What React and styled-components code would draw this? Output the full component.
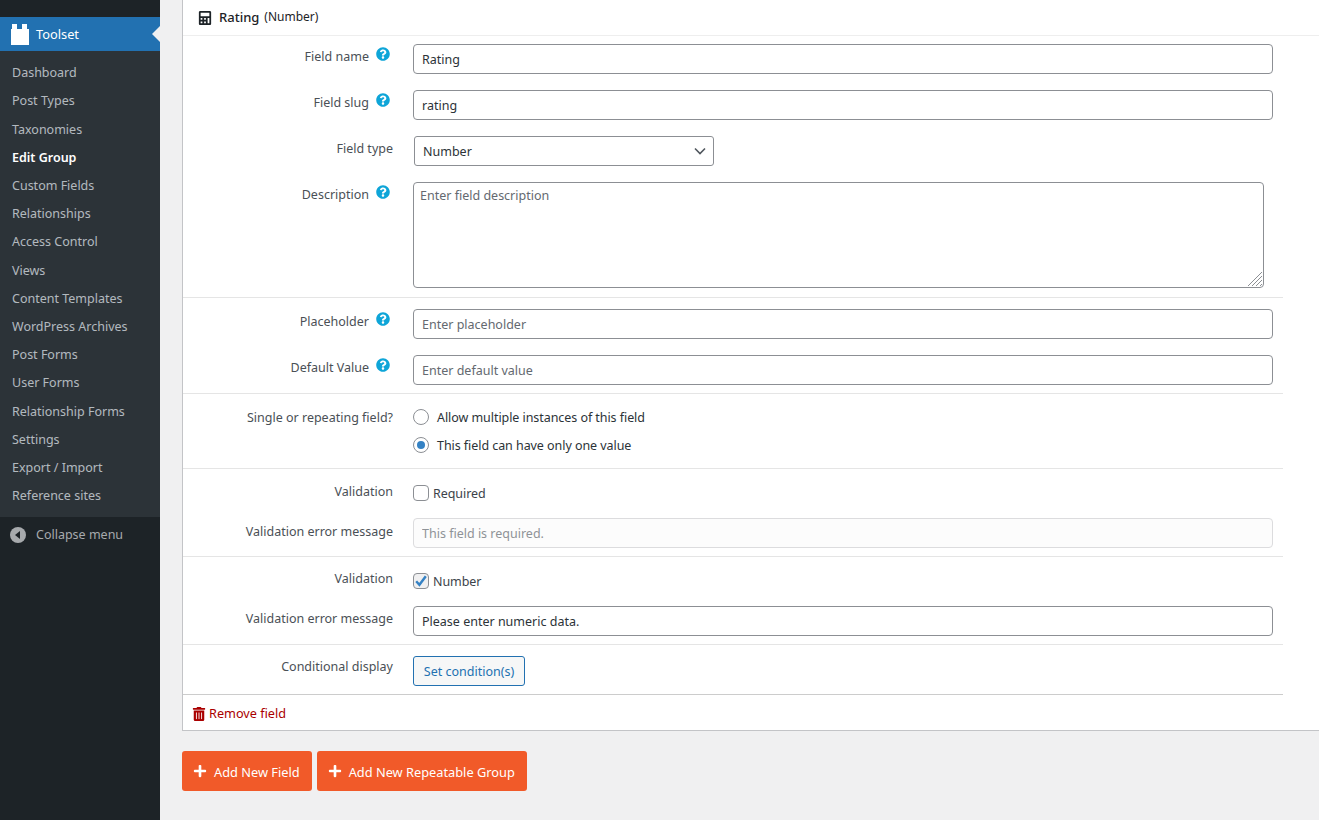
import styled, { createGlobalStyle } from "styled-components";
import { FaCalculator, FaQuestionCircle, FaTrashAlt, FaPlus } from "react-icons/fa";

const menuItems = [
  "Dashboard",
  "Post Types",
  "Taxonomies",
  "Edit Group",
  "Custom Fields",
  "Relationships",
  "Access Control",
  "Views",
  "Content Templates",
  "WordPress Archives",
  "Post Forms",
  "User Forms",
  "Relationship Forms",
  "Settings",
  "Export / Import",
  "Reference sites",
];

const chevron =
  "data:image/svg+xml,%3Csvg xmlns='http://www.w3.org/2000/svg' width='12' height='8' viewBox='0 0 12 8'%3E%3Cpath d='M1 1.5l5 5 5-5' fill='none' stroke='%2350575e' stroke-width='1.6'/%3E%3C/svg%3E";
const tick =
  "data:image/svg+xml,%3Csvg xmlns='http://www.w3.org/2000/svg' width='16' height='16' viewBox='0 0 16 16'%3E%3Cpath d='M3.2 8.2l3.2 3.6 6.4-8.6' fill='none' stroke='%233582c4' stroke-width='2.4'/%3E%3C/svg%3E";

const GlobalStyle = createGlobalStyle`
  html, body {
    margin: 0;
    padding: 0;
    height: 100%;
    overflow: hidden;
    background: #f0f0f1;
    font-family: "Noto Sans", "Open Sans", sans-serif;
    font-size: 12.5px;
    line-height: 18.2px;
    color: #4a5056;
  }
`;

const Page = styled.div`
  display: flex;
  height: 820px;
  overflow: hidden;
`;

const Sidebar = styled.nav`
  width: 160px;
  flex: none;
  background: #1d2327;
  padding-top: 17px;
`;

const CurrentMenu = styled.div`
  position: relative;
  display: flex;
  align-items: center;
  gap: 7px;
  height: 34px;
  padding-left: 11px;
  background: #2271b1;
  color: #fff;
  font-size: 12.8px;
  &::after {
    content: "";
    position: absolute;
    right: 0;
    top: 9px;
    border: 8px solid transparent;
    border-right-color: #f0f0f1;
  }
`;

const SubMenu = styled.ul`
  list-style: none;
  margin: 0;
  padding: 8.2px 0 6.6px;
  background: #2c3338;
`;

const SubItem = styled.li`
  padding: 5px 12px;
  color: ${(p) => (p.$active ? "#fff" : "rgba(240, 246, 252, 0.7)")};
  font-weight: ${(p) => (p.$active ? 600 : 400)};
`;

const Collapse = styled.div`
  display: flex;
  align-items: center;
  gap: 10px;
  padding: 9px 10px 7px;
  color: #a7aaad;
`;

const Main = styled.main`
  flex: 1;
  min-width: 0;
  padding-left: 22px;
`;

const Card = styled.section`
  background: #fff;
  border-left: 1px solid #c3c4c7;
  border-bottom: 1px solid #c3c4c7;
`;

const CardHeader = styled.header`
  display: flex;
  align-items: center;
  gap: 7px;
  height: 35px;
  padding-left: 15px;
  border-bottom: 1px solid #eee;
  color: #1d2327;
  svg {
    font-size: 14px;
  }
`;

const Title = styled.span`
  font-weight: 500;
  font-size: 13px;
`;

const TitleType = styled.span`
  margin-left: -2px;
  font-size: 12px;
`;

const Body = styled.div`
  width: 1100px;
`;

const Group = styled.div`
  display: flex;
  flex-direction: column;
  gap: ${(p) => p.$gap ?? 16}px;
  padding: ${(p) => p.$top}px 0 ${(p) => p.$bottom}px;
  border-bottom: 1px solid ${(p) => (p.$strong ? "#ccc" : "#e5e5e5")};
`;

const Row = styled.div`
  display: grid;
  grid-template-columns: 230px 1fr;
`;

const Label = styled.div`
  display: flex;
  justify-content: flex-end;
  align-items: flex-start;
  gap: 7px;
  padding-right: 20px;
  margin-top: ${(p) => p.$top ?? 4}px;
  svg {
    color: #0ea5d8;
    font-size: 14px;
    margin: 0 3px 0 0;
    position: relative;
    top: -1px;
  }
`;

const TextInput = styled.input`
  box-sizing: border-box;
  display: block;
  width: 860px;
  height: 30px;
  padding: 0 8px;
  border: 1px solid #8c8f94;
  border-radius: 4px;
  font: inherit;
  color: #2c3338;
  background: #fff;
  outline: none;
  &::placeholder {
    color: #646970;
    opacity: 1;
  }
  &:disabled {
    padding-top: 1px;
    background: #fcfcfc;
    border-color: #dcdcde;
    &::placeholder {
      color: #8f9397;
    }
  }
`;

const Select = styled.select`
  appearance: none;
  box-sizing: border-box;
  display: block;
  width: 300px;
  height: 30px;
  margin-left: 1px;
  padding: 2px 24px 0 8px;
  border: 1px solid #8c8f94;
  border-radius: 3px;
  font: inherit;
  color: #2c3338;
  background: #fff url("${chevron}") no-repeat right 7px center;
`;

const AreaWrap = styled.div`
  position: relative;
  width: 851px;
  svg {
    position: absolute;
    right: 1px;
    bottom: 1px;
  }
`;

const TextArea = styled.textarea`
  box-sizing: border-box;
  display: block;
  width: 851px;
  height: 106px;
  padding: 4px 6px;
  border: 1px solid #8c8f94;
  border-radius: 4px;
  font: inherit;
  color: #2c3338;
  outline: none;
  resize: none;
  &::placeholder {
    color: #646970;
    opacity: 1;
  }
`;

const Options = styled.div`
  display: flex;
  flex-direction: column;
  gap: 8px;
`;

const Option = styled.label`
  display: flex;
  align-items: flex-start;
  height: 20px;
  line-height: 22px;
  letter-spacing: -0.06px;
  gap: ${(p) => p.$gap ?? 8}px;
  color: ${(p) => p.$color ?? "#2c3338"};
`;

const Radio = styled.input.attrs({ type: "radio" })`
  appearance: none;
  box-sizing: border-box;
  position: relative;
  width: 16px;
  height: 16px;
  margin: 2px 0 0;
  border: 1px solid #8c8f94;
  border-radius: 50%;
  background: #fff;
  &:checked::before {
    content: "";
    position: absolute;
    inset: 3px;
    border-radius: 50%;
    background: #3582c4;
  }
`;

const Check = styled.input.attrs({ type: "checkbox" })`
  appearance: none;
  box-sizing: border-box;
  width: 16px;
  height: 16px;
  margin: 2px 0 0;
  border: 1px solid #8c8f94;
  border-radius: 4px;
  background: #fff;
  &:checked {
    background: #f0f0f1 url("${tick}") center no-repeat;
  }
`;

const OutlineButton = styled.button`
  box-sizing: border-box;
  width: 112px;
  height: 30px;
  padding: 2px 0 0;
  border: 1px solid #2271b1;
  border-radius: 3px;
  background: #f6f7f7;
  color: #2271b1;
  font: inherit;
`;

const RemoveLink = styled.a`
  display: flex;
  align-items: center;
  gap: 3px;
  height: 33px;
  padding: 2px 0 0 9px;
  color: #a00;
  font-size: 12.7px;
  svg {
    font-size: 14px;
  }
`;

const Actions = styled.div`
  display: flex;
  gap: 5px;
  margin-top: 20px;
`;

const AddButton = styled.button`
  display: flex;
  align-items: center;
  gap: 7px;
  height: 40px;
  padding: 2px 12px 0 11px;
  border: 0;
  border-radius: 3px;
  background: #f15a29;
  color: #fff;
  font: inherit;
  font-size: 12.8px;
  svg {
    font-size: 14px;
    margin-top: -2px;
  }
`;

function Field({ label, help, top, children }) {
  return (
    <Row>
      <Label $top={top}>
        {label}
        {help && <FaQuestionCircle />}
      </Label>
      <div>{children}</div>
    </Row>
  );
}

export default function App() {
  return (
    <>
      <GlobalStyle />
      <Page>
        <Sidebar>
          <CurrentMenu>
            <svg width="18" height="21" viewBox="0 0 18 21">
              <path fill="#fff" d="M0 5h1V0h5v5h5V0h5v5h2v16H0z" />
            </svg>
            Toolset
          </CurrentMenu>
          <SubMenu>
            {menuItems.map((item) => (
              <SubItem key={item} $active={item === "Edit Group"}>
                {item}
              </SubItem>
            ))}
          </SubMenu>
          <Collapse>
            <svg width="16" height="16" viewBox="0 0 16 16">
              <circle cx="8" cy="8" r="8" fill="#a7aaad" />
              <path fill="#1d2327" d="M10 4v8L5 8z" />
            </svg>
            Collapse menu
          </Collapse>
        </Sidebar>
        <Main>
          <Card>
            <CardHeader>
              <FaCalculator />
              <Title>Rating</Title>
              <TitleType>(Number)</TitleType>
            </CardHeader>
            <Body>
              <Group $top={8} $bottom={9}>
                <Field label="Field name" help>
                  <TextInput defaultValue="Rating" />
                </Field>
                <Field label="Field slug" help>
                  <TextInput defaultValue="rating" />
                </Field>
                <Field label="Field type">
                  <Select defaultValue="Number">
                    <option>Number</option>
                  </Select>
                </Field>
                <Field label="Description" help>
                  <AreaWrap>
                    <TextArea placeholder="Enter field description" />
                    <svg width="16" height="16" viewBox="0 0 16 16" stroke="#8c8f94" strokeWidth="1">
                      <path d="M1 15L15 1M5 15L15 5M9 15l6-6M13 15l2-2" />
                    </svg>
                  </AreaWrap>
                </Field>
              </Group>
              <Group $top={11} $bottom={8}>
                <Field label="Placeholder" help>
                  <TextInput placeholder="Enter placeholder" />
                </Field>
                <Field label="Default Value" help>
                  <TextInput placeholder="Enter default value" />
                </Field>
              </Group>
              <Group $top={13} $bottom={13}>
                <Field label="Single or repeating field?" top={2}>
                  <Options>
                    <Option>
                      <Radio name="repeat" />
                      Allow multiple instances of this field
                    </Option>
                    <Option>
                      <Radio name="repeat" defaultChecked />
                      This field can have only one value
                    </Option>
                  </Options>
                </Field>
              </Group>
              <Group $top={14} $bottom={8} $gap={15}>
                <Field label="Validation" top={0}>
                  <Option $gap={4} $color="#3c434a">
                    <Check />
                    Required
                  </Option>
                </Field>
                <Field label="Validation error message" top={5}>
                  <TextInput disabled placeholder="This field is required." />
                </Field>
              </Group>
              <Group $top={14} $bottom={8} $gap={15}>
                <Field label="Validation" top={-1}>
                  <Option $gap={4} $color="#3c434a">
                    <Check defaultChecked />
                    Number
                  </Option>
                </Field>
                <Field label="Validation error message" top={4}>
                  <TextInput defaultValue="Please enter numeric data." />
                </Field>
              </Group>
              <Group $top={11} $bottom={8} $strong>
                <Field label="Conditional display" top={2}>
                  <OutlineButton>Set condition(s)</OutlineButton>
                </Field>
              </Group>
              <RemoveLink>
                <FaTrashAlt />
                Remove field
              </RemoveLink>
            </Body>
          </Card>
          <Actions>
            <AddButton>
              <FaPlus />
              Add New Field
            </AddButton>
            <AddButton>
              <FaPlus />
              Add New Repeatable Group
            </AddButton>
          </Actions>
        </Main>
      </Page>
    </>
  );
}
